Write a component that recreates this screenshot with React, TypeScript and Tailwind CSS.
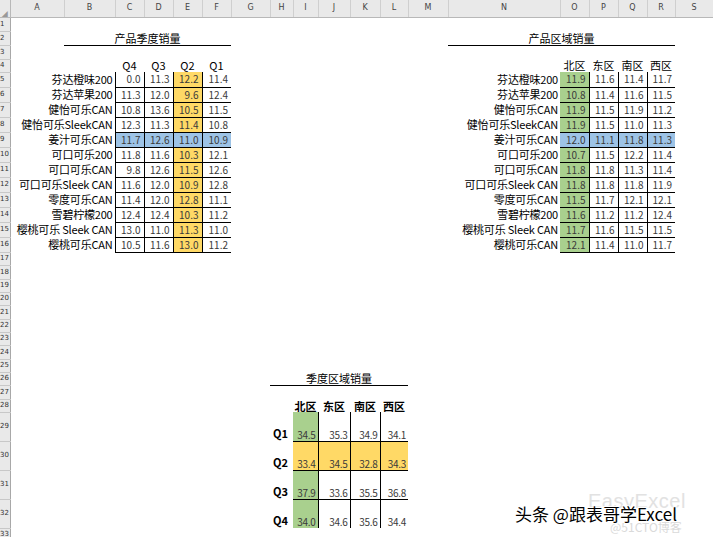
import React from "react";

type C = { t?: string; span?: number; cls?: string };

const COLS = ["A","B","C","D","E","F","G","H","I","J","K","L","M","N","O","P","Q","R","S"];
const WIDTHS = ["w-[54px]","w-[51px]","w-[29px]","w-[29px]","w-[29px]","w-[29px]","w-[39px]","w-[23px]","w-[25px]","w-[32px]","w-[30px]","w-[28px]","w-[40px]","w-[112px]","w-[29px]","w-[29px]","w-[29px]","w-[28px]","w-[38px]"];

const left: [string, number[]][] = [
  ["芬达橙味200", [0.0, 11.3, 12.2, 11.4]],
  ["芬达苹果200", [11.3, 12.0, 9.6, 12.4]],
  ["健怡可乐CAN", [10.8, 13.6, 10.5, 11.5]],
  ["健怡可乐SleekCAN", [12.3, 11.3, 11.4, 10.8]],
  ["姜汁可乐CAN", [11.7, 12.6, 11.0, 10.9]],
  ["可口可乐200", [11.8, 11.6, 10.3, 12.1]],
  ["可口可乐CAN", [9.8, 12.6, 11.5, 12.6]],
  ["可口可乐Sleek CAN", [11.6, 12.0, 10.9, 12.8]],
  ["零度可乐CAN", [11.4, 12.0, 12.8, 11.1]],
  ["雪碧柠檬200", [12.4, 12.4, 10.3, 11.2]],
  ["樱桃可乐 Sleek CAN", [13.0, 11.0, 11.3, 11.0]],
  ["樱桃可乐CAN", [10.5, 11.6, 13.0, 11.2]],
];
const right: number[][] = [
  [11.9, 11.6, 11.4, 11.7],
  [10.8, 11.4, 11.6, 11.5],
  [11.9, 11.5, 11.9, 11.2],
  [11.9, 11.5, 11.0, 11.3],
  [12.0, 11.1, 11.8, 11.3],
  [10.7, 11.5, 12.2, 11.4],
  [11.8, 11.8, 11.3, 11.4],
  [11.8, 11.8, 11.8, 11.9],
  [11.5, 11.7, 12.1, 12.1],
  [11.6, 11.2, 11.2, 12.4],
  [11.7, 11.6, 11.5, 11.5],
  [12.1, 11.4, 11.0, 11.7],
];
const bottom: [string, number[]][] = [
  ["Q1", [34.5, 35.3, 34.9, 34.1]],
  ["Q2", [33.4, 34.5, 32.8, 34.3]],
  ["Q3", [37.9, 33.6, 35.5, 36.8]],
  ["Q4", [34.0, 34.6, 35.6, 34.4]],
];

const HEIGHTS: string[] = [];
for (let r = 1; r <= 33; r++) {
  if (r <= 3) HEIGHTS.push("h-[14px]");
  else if (r === 4) HEIGHTS.push("h-[13px]");
  else if (r <= 16) HEIGHTS.push("h-[15px]");
  else if (r <= 28) HEIGHTS.push(r % 3 === 0 ? "h-[14px]" : "h-[13px]");
  else if (r <= 32) HEIGHTS.push("h-[29px]");
  else HEIGHTS.push("h-[12px]");
}

const NUM = "text-right pr-[3px] text-[10px] text-[#3a3a3a] border-b border-black";
const BLUE = "bg-[#9dc3e6]";
const YEL = "bg-[#ffd966]";
const GRN = "bg-[#a9d08e]";
const LABEL = "text-right pr-[2px] text-[11px] tracking-[-0.2px] whitespace-nowrap";

function rowCells(r: number): (C | null)[] {
  const cells: (C | null)[] = COLS.map(() => ({}));
  const setSpan = (c: number, cell: C) => {
    cells[c] = cell;
    for (let k = 1; k < (cell.span || 1); k++) cells[c + k] = null;
  };
  if (r === 2) {
    setSpan(1, { t: "产品季度销量", span: 5, cls: "text-center text-[11px] border-b border-black align-bottom pb-[1px]" });
    setSpan(13, { t: "产品区域销量", span: 5, cls: "text-center text-[11px] border-b border-black align-bottom pb-[1px]" });
  }
  if (r === 4) {
    ["Q4", "Q3", "Q2", "Q1"].forEach((q, i) => (cells[2 + i] = { t: q, cls: "text-center text-[11px] align-bottom pb-[1px]" }));
    ["北区", "东区", "南区", "西区"].forEach((q, i) => (cells[14 + i] = { t: q, cls: "text-center text-[11px] align-bottom pb-[1px]" }));
  }
  if (r >= 5 && r <= 16) {
    const i = r - 5;
    const blue = r === 9;
    setSpan(0, { t: left[i][0], span: 2, cls: LABEL });
    left[i][1].forEach((v, j) => {
      const bg = blue ? BLUE : j === 2 ? YEL : "";
      cells[2 + j] = { t: v.toFixed(1), cls: `${NUM} border-l ${bg}` };
    });
    cells[13] = { t: left[i][0], cls: LABEL };
    right[i].forEach((v, j) => {
      const bg = blue ? BLUE : j === 0 ? GRN : "";
      cells[14 + j] = { t: v.toFixed(1), cls: `${NUM} ${j > 0 ? "border-l" : ""} ${bg}` };
    });
  }
  if (r === 26) {
    setSpan(7, { t: "季度区域销量", span: 5, cls: "text-center text-[11px] border-b border-black align-bottom pb-[1px]" });
  }
  if (r === 28) {
    ["北区", "东区", "南区", "西区"].forEach((q, i) => (cells[8 + i] = { t: q, cls: "text-center text-[11px] font-bold align-bottom" }));
  }
  if (r >= 29 && r <= 32) {
    const [lab, vals] = bottom[r - 29];
    cells[7] = { t: lab, cls: "text-left pl-[3px] text-[11px] font-bold align-bottom pb-[2px]" };
    vals.forEach((v, j) => {
      const bg = r === 30 ? YEL : j === 0 ? GRN : "";
      const bb = r < 32 ? "border-b border-black" : "";
      cells[8 + j] = {
        t: v.toFixed(1),
        cls: `text-right pr-[2px] text-[10px] tracking-[-0.3px] text-[#3a3a3a] align-bottom pb-[1px] ${bb} ${j > 0 ? "border-l border-black" : ""} ${bg}`,
      };
    });
  }
  return cells;
}

export default function App() {
  const rows = Array.from({ length: 33 }, (_, i) => i + 1);
  return (
    <div className="relative w-[713px] h-[537px] overflow-hidden bg-white" style={{ fontFamily: '"Noto Sans CJK SC", "Liberation Sans", sans-serif' }}>
      <table className="table-fixed border-collapse w-[713px] leading-none text-black">
        <colgroup>
          <col className="w-[10px]" />
          {WIDTHS.map((w, i) => (
            <col key={i} className={w} />
          ))}
        </colgroup>
        <thead>
          <tr className="h-[17px] bg-[#e9e9e9]">
            <th className="p-0 border-b border-r border-[#b8b8b8] text-[6px] text-[#999] align-bottom">◢</th>
            {COLS.map((c) => (
              <th key={c} className="p-0 border-b border-r border-[#cfcfcf] border-b-[#b8b8b8] text-[8px] font-normal text-[#444]" style={{ fontFamily: '"DejaVu Sans", sans-serif' }}>
                {c}
              </th>
            ))}
          </tr>
        </thead>
        <tbody>
          {rows.map((r) => (
            <tr key={r} className={HEIGHTS[r - 1]}>
              <td className="p-0 bg-[#e9e9e9] border-b border-r border-[#c8c8c8] border-r-[#a8a8a8] text-[7px] text-[#333] text-left overflow-hidden" style={{ fontFamily: '"DejaVu Sans", sans-serif' }}>
                {r}
              </td>
              {rowCells(r).map((c, i) =>
                c === null ? null : (
                  <td key={i} colSpan={c.span || 1} className={`p-0 whitespace-nowrap ${c.cls || ""}`}>
                    {c.t || ""}
                  </td>
                )
              )}
            </tr>
          ))}
        </tbody>
      </table>
      <div className="absolute left-[588px] top-[486px] text-[20px] text-[#e2e2e2] tracking-wide" style={{ fontFamily: '"Liberation Sans", sans-serif' }}>
        EasyExcel
      </div>
      <div className="absolute left-[610px] top-[518px] text-[12px] text-[#dadada]">@51CTO博客</div>
      <div
        className="absolute left-[515px] top-[501px] text-[17px] text-black"
        style={{ textShadow: "1px 1px 0 #fff, -1px -1px 0 #fff, 1px -1px 0 #fff, -1px 1px 0 #fff" }}
      >
        头条 @跟表哥学Excel
      </div>
    </div>
  );
}
